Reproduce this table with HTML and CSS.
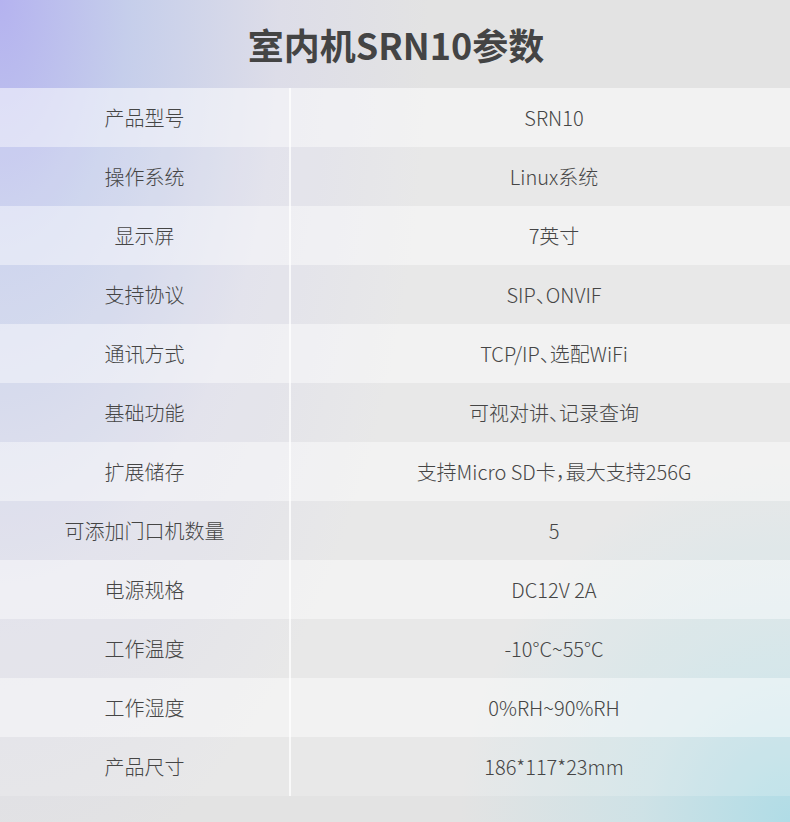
FILE: index.html
```html
<!DOCTYPE html>
<html lang="zh-CN">
<head>
<meta charset="utf-8">
<title>室内机SRN10参数</title>
<link rel="stylesheet" href="styles.css">
</head>
<body>
<div class="page">
  <header class="head"><h1 class="title">室内机SRN10参数</h1></header>
  <div class="table">
    <div class="row light"><div class="k">产品型号</div><div class="v">SRN10</div></div>
    <div class="row dark"><div class="k">操作系统</div><div class="v">Linux系统</div></div>
    <div class="row light"><div class="k">显示屏</div><div class="v">7英寸</div></div>
    <div class="row dark"><div class="k">支持协议</div><div class="v">SIP、ONVIF</div></div>
    <div class="row light"><div class="k">通讯方式</div><div class="v">TCP/IP、选配WiFi</div></div>
    <div class="row dark"><div class="k">基础功能</div><div class="v">可视对讲、记录查询</div></div>
    <div class="row light"><div class="k">扩展储存</div><div class="v">支持Micro SD卡，最大支持256G</div></div>
    <div class="row dark"><div class="k">可添加门口机数量</div><div class="v">5</div></div>
    <div class="row light"><div class="k">电源规格</div><div class="v">DC12V 2A</div></div>
    <div class="row dark"><div class="k">工作温度</div><div class="v">-10°C~55°C</div></div>
    <div class="row light"><div class="k">工作湿度</div><div class="v">0%RH~90%RH</div></div>
    <div class="row dark"><div class="k">产品尺寸</div><div class="v">186*117*23mm</div></div>
  </div>
</div>
</body>
</html>
```

FILE: styles.css
```css
html, body {
  margin: 0;
  padding: 0;
}
body {
  width: 790px;
  height: 822px;
  overflow: hidden;
  font-family: "Noto Sans CJK SC", "Noto Sans", sans-serif;
  color: #444;
}
.page {
  width: 790px;
  height: 822px;
  background:
    radial-gradient(ellipse 330px 360px at 100% 100%, rgba(176, 220, 230, 1) 0%, rgba(192, 225, 232, 0.6) 45%, rgba(227, 227, 227, 0) 100%),
    radial-gradient(ellipse 430px 900px at 0% 0%, rgba(178, 176, 240, 0.95) 0%, rgba(186, 198, 238, 0.72) 30%, rgba(212, 212, 240, 0.4) 65%, rgba(227, 227, 227, 0) 100%),
    #e3e3e3;
}
.head {
  height: 88px;
  display: flex;
  align-items: center;
  justify-content: center;
}
.title {
  margin: 0;
  font-size: 36px;
  font-weight: 700;
  color: #444;
  padding-left: 2px;
}
.table {
  display: flex;
  flex-direction: column;
}
.row {
  height: 59px;
  display: grid;
  grid-template-columns: 289px 2px 1fr;
  font-size: 20px;
  font-weight: 300;
  color: #454545;
}
.row.light { background: rgba(255, 255, 255, 0.52); }
.row.dark { background: rgba(255, 255, 255, 0.18); }
.row::before {
  content: "";
  grid-column: 2;
  grid-row: 1;
  background: rgba(255, 255, 255, 0.75);
}
.k, .v {
  grid-row: 1;
  display: flex;
  align-items: center;
  justify-content: center;
  white-space: nowrap;
}
.k { grid-column: 1; }
.v {
  grid-column: 3;
  padding-left: 27px;
  font-feature-settings: "halt";
}
```
